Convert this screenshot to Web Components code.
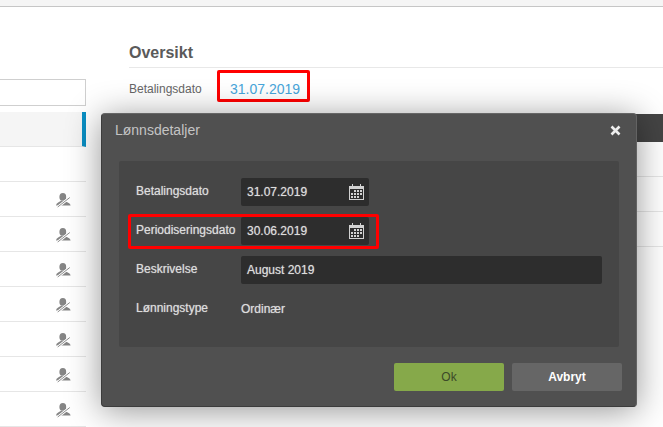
<!DOCTYPE html>
<html>
<head>
<meta charset="utf-8">
<title>Lønnsdetaljer</title>
<style>
    html, body{
        margin: 0;
        height: 427px;
        overflow: hidden;
        background: #fff;
        font-family: "Liberation Sans", Arial, sans-serif;
    }
</style>
</head>
<body>

<app-page>
    <list-panel slot="left">
        <list-row selected></list-row>
        <list-row></list-row>
        <list-row icon></list-row>
        <list-row icon></list-row>
        <list-row icon></list-row>
        <list-row icon></list-row>
        <list-row icon></list-row>
        <list-row icon></list-row>
        <list-row icon></list-row>
    </list-panel>
    <overview-panel slot="main" label="Betalingsdato" value="31.07.2019">Oversikt</overview-panel>
    <pay-dialog slot="overlay" heading="Lønnsdetaljer">
        <field-row label="Betalingsdato"><date-input>31.07.2019</date-input></field-row>
        <field-row label="Periodiseringsdato" highlight><date-input>30.06.2019</date-input></field-row>
        <field-row label="Beskrivelse"><text-input>August 2019</text-input></field-row>
        <field-row label="Lønningstype" plain>Ordinær</field-row>
        <dialog-button slot="buttons" kind="ok">Ok</dialog-button>
        <dialog-button slot="buttons">Avbryt</dialog-button>
    </pay-dialog>
</app-page>

<script>
// page frame
class AppPage extends HTMLElement{
    constructor(){
        super();
        this.attachShadow({mode: 'open'});
        this.shadowRoot.innerHTML = `
        <style>
        :host{
            display: block;
            position: relative;
            height: 427px;
            overflow: hidden;
        }
        .topbar{
            height: 6px;
            background: #f5f5f5;
            border-bottom: 1px solid #c6c6c6;
        }
        .columns{
            display: flex;
            gap: 43px;
        }
        </style>
        <div class="topbar"></div>
        <div class="columns">
            <slot name="left"></slot>
            <slot name="main"></slot>
        </div>
        <slot name="overlay"></slot>
        `;
    }
}

class ListPanel extends HTMLElement{
    constructor(){
        super();
        this.attachShadow({mode: 'open'});
        this.shadowRoot.innerHTML = `
        <style>
        :host{
            display: block;
            width: 86px;
            flex: none;
            padding-top: 72px;
        }
        .search{
            height: 25px;
            margin-left: -2px;
            margin-bottom: 6px;
            border: 1px solid #cfcfcf;
            background: #fff;
        }
        </style>
        <div class="search"></div>
        <slot></slot>
        `;
    }
}

class ListRow extends HTMLElement{
    constructor(){
        super();
        this.attachShadow({mode: 'open'});
        const icon = this.hasAttribute('icon') ? `
            <svg width="15" height="15" viewBox="0 0 15 15">
                <ellipse cx="6.8" cy="3.9" rx="3.4" ry="3.9" fill="#858585"/>
                <path d="M0 12.4 C0.4 10 3 9.2 4.8 8 L8.8 8 C10.6 9.2 14.2 10 14.6 12.4 Z" fill="#858585"/>
                <path d="M1.4 14.3 L14.2 4.2" stroke="#fff" stroke-width="2.6"/>
                <path d="M1.7 14 L13.8 4.5" stroke="#8e8e8e" stroke-width="1"/>
            </svg>` : '';
        this.shadowRoot.innerHTML = `
        <style>
        :host{
            display: flex;
            align-items: center;
            justify-content: flex-end;
            box-sizing: border-box;
            height: 35px;
            padding-right: 15px;
            border-bottom: 1px solid #e6e6e6;
        }
        :host([selected]){
            background: #f5f5f5;
            border-right: 4px solid #0a8fc4;
        }
        svg{
            display: block;
            margin-top: 3px;
        }
        </style>
        ${icon}
        `;
    }
}

class OverviewPanel extends HTMLElement{
    constructor(){
        super();
        this.attachShadow({mode: 'open'});
        this.shadowRoot.innerHTML = `
        <style>
        :host{
            display: block;
            flex: 1;
            min-width: 0;
        }
        h2{
            margin: 0;
            padding-top: 37px;
            height: 23px;
            font-size: 16px;
            line-height: 18px;
            font-weight: bold;
            color: #5a5a5a;
            border-bottom: 1px solid #e8e8e8;
        }
        .row{
            display: flex;
            align-items: center;
            margin-top: 2px;
            height: 32px;
        }
        .label{
            width: 88px;
            padding-top: 5px;
            font-size: 12px;
            color: #666;
        }
        .value{
            box-sizing: border-box;
            width: 93px;
            height: 32px;
            padding-left: 10px;
            line-height: 32px;
            font-size: 14px;
            color: #47a5da;
            border: 3px solid #f00;
            border-radius: 2px;
        }
        .head{
            height: 28px;
            margin-top: 12px;
            background: #444;
        }
        .line{
            height: 34px;
            border-bottom: 1px solid #e6e6e6;
        }
        </style>
        <h2><slot></slot></h2>
        <div class="row">
            <span class="label">${this.getAttribute('label')}</span>
            <span class="value">${this.getAttribute('value')}</span>
        </div>
        <div class="head"></div>
        <div class="line"></div>
        <div class="line"></div>
        <div class="line"></div>
        `;
    }
}

class PayDialog extends HTMLElement{
    constructor(){
        super();
        this.attachShadow({mode: 'open'});
        this.shadowRoot.innerHTML = `
        <style>
        :host{
            position: absolute;
            left: 101px;
            top: 113px;
            box-sizing: border-box;
            width: 536px;
            height: 294px;
            padding: 0 14px 15px 17px;
            background: #505050;
            border: 1px solid #3c3c3c;
            border-top-color: #666;
            border-right-color: #636363;
            border-radius: 4px;
            box-shadow: 0 4px 34px rgba(0,0,0,.42);
            display: flex;
            flex-direction: column;
        }
        .title{
            display: flex;
            align-items: center;
            justify-content: space-between;
            box-sizing: border-box;
            height: 47px;
            padding: 0 1px 15px 0;
            color: #c4c4c4;
            font-size: 14px;
            margin-left: -4px;
        }
        .title svg{
            display: block;
        }
        .body{
            box-sizing: border-box;
            height: 186px;
            margin-right: 3px;
            padding: 17px;
            background: #464646;
            border-radius: 2px;
            display: flex;
            flex-direction: column;
            gap: 11px;
        }
        .buttons{
            display: flex;
            justify-content: flex-end;
            gap: 8px;
            margin-top: 16px;
        }
        </style>
        <div class="title">
            <span>${this.getAttribute('heading')}</span>
            <svg width="11" height="11" viewBox="0 0 11 11"><path d="M1.5 1.5 L9.5 9.5 M9.5 1.5 L1.5 9.5" stroke="#eee" stroke-width="2.6"/></svg>
        </div>
        <div class="body"><slot></slot></div>
        <div class="buttons"><slot name="buttons"></slot></div>
        `;
    }
}

class FieldRow extends HTMLElement{
    constructor(){
        super();
        this.attachShadow({mode: 'open'});
        this.shadowRoot.innerHTML = `
        <style>
        :host{
            display: flex;
            align-items: center;
            position: relative;
            height: 28px;
            font-size: 12px;
            color: #ddd;
            text-shadow: 0 0 1px rgba(221,221,221,.7);
        }
        .label{
            flex: none;
            width: 105px;
            margin-top: -2px;
        }
        :host([highlight])::after{
            content: "";
            position: absolute;
            left: -8px;
            top: -3px;
            width: 245px;
            height: 29px;
            border: 3px solid #f00;
            border-radius: 2px;
        }
        </style>
        <span class="label">${this.getAttribute('label')}</span>
        <slot></slot>
        `;
    }
}

class DateInput extends HTMLElement{
    constructor(){
        super();
        this.attachShadow({mode: 'open'});
        this.shadowRoot.innerHTML = `
        <style>
        :host{
            display: flex;
            align-items: center;
            justify-content: space-between;
            box-sizing: border-box;
            width: 128px;
            height: 28px;
            padding: 0 5px 0 6px;
            background: #2d2d2d;
            border-radius: 2px;
            color: #ddd;
            font-size: 12px;
        }
        svg{
            display: block;
        }
        </style>
        <slot></slot>
        <svg width="15" height="16" viewBox="0 0 15 16">
            <path d="M0 2 H3 V0 H4 V2 H11 V0 H12 V2 H15 V16 H0 Z" fill="#d2d2d2"/>
            <rect x="1" y="5" width="13" height="10" fill="#2d2d2d"/>
            <g fill="#d2d2d2">
                <rect x="5" y="6" width="2" height="2"/><rect x="8" y="6" width="2" height="2"/><rect x="11" y="6" width="2" height="2"/>
                <rect x="2" y="9" width="2" height="2"/><rect x="5" y="9" width="2" height="2"/><rect x="8" y="9" width="2" height="2"/><rect x="11" y="9" width="2" height="2"/>
                <rect x="2" y="12" width="2" height="2"/><rect x="5" y="12" width="2" height="2"/><rect x="8" y="12" width="2" height="2"/>
            </g>
        </svg>
        `;
    }
}

class TextInput extends HTMLElement{
    constructor(){
        super();
        this.attachShadow({mode: 'open'});
        this.shadowRoot.innerHTML = `
        <style>
        :host{
            display: flex;
            align-items: center;
            flex: 1;
            box-sizing: border-box;
            height: 28px;
            padding: 0 6px;
            background: #2d2d2d;
            border-radius: 2px;
            color: #ddd;
            font-size: 12px;
        }
        </style>
        <slot></slot>
        `;
    }
}

class DialogButton extends HTMLElement{
    constructor(){
        super();
        this.attachShadow({mode: 'open'});
        this.shadowRoot.innerHTML = `
        <style>
        :host{
            display: flex;
            align-items: center;
            justify-content: center;
            width: 110px;
            height: 28px;
            border-radius: 2px;
            background: #666;
            color: #fff;
            font-size: 12px;
            font-weight: bold;
        }
        :host([kind="ok"]){
            background: #86a94a;
            color: #3c4a28;
            font-weight: normal;
        }
        </style>
        <slot></slot>
        `;
    }
}

window.customElements.define('app-page', AppPage);
window.customElements.define('list-panel', ListPanel);
window.customElements.define('list-row', ListRow);
window.customElements.define('overview-panel', OverviewPanel);
window.customElements.define('pay-dialog', PayDialog);
window.customElements.define('field-row', FieldRow);
window.customElements.define('date-input', DateInput);
window.customElements.define('text-input', TextInput);
window.customElements.define('dialog-button', DialogButton);
</script>
</body>
</html>
